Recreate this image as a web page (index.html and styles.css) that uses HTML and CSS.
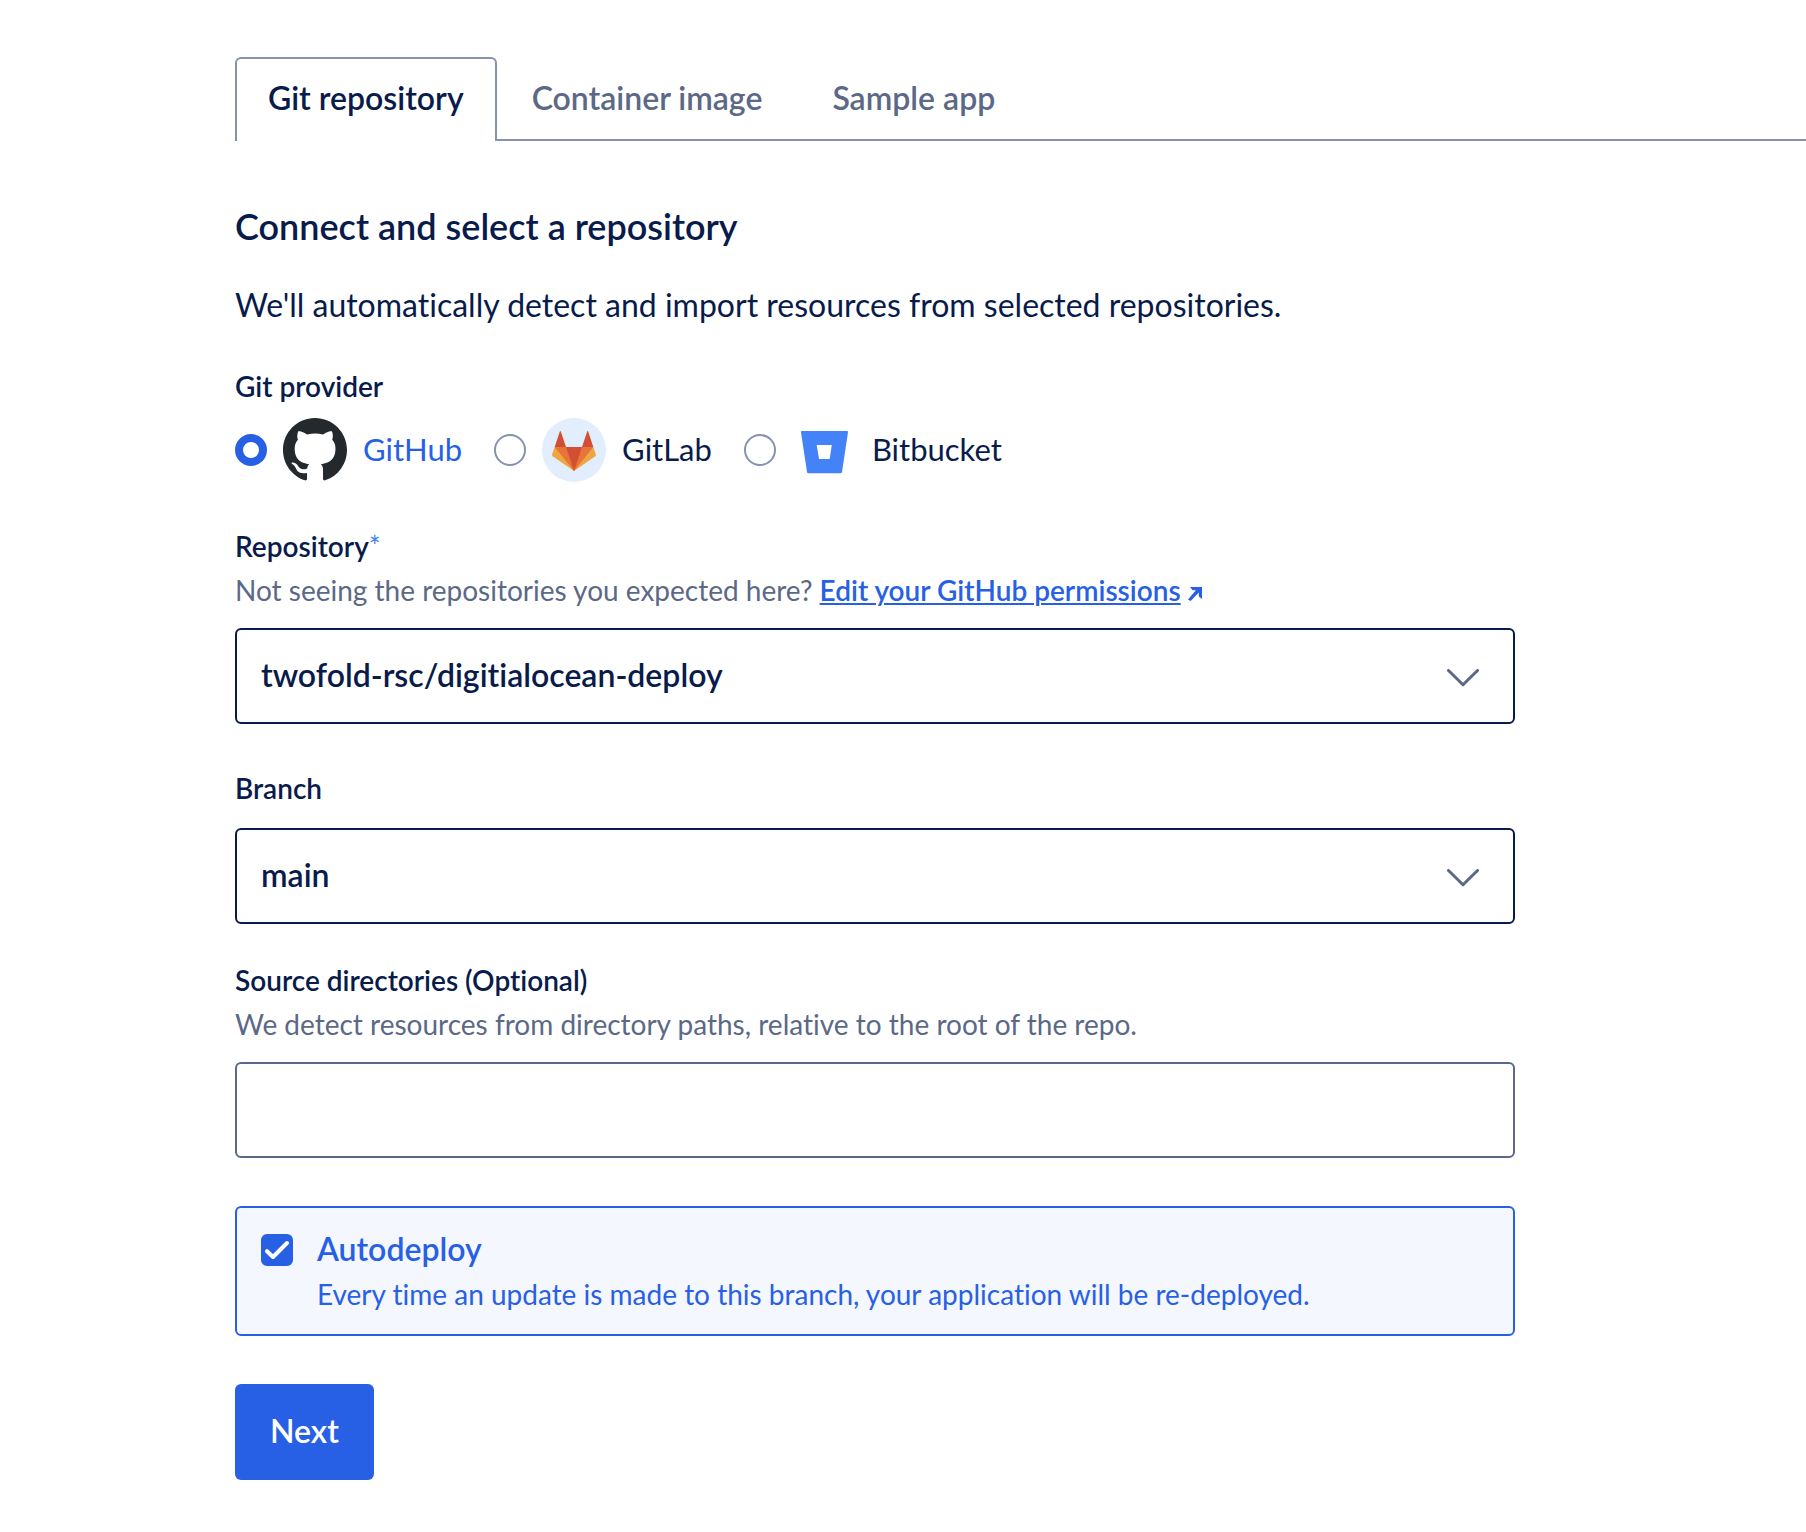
FILE: index.html
```html
<!DOCTYPE html>
<html lang="en">
<head>
  <meta charset="utf-8">
  <meta name="viewport" content="width=device-width, initial-scale=1">
  <title>Create app</title>
  <link rel="stylesheet" href="styles.css">
</head>
<body>
  <main class="page">
    <div class="tabs" role="tablist">
      <button class="tab tab-active" type="button" role="tab" aria-selected="true">Git repository</button>
      <button class="tab" type="button" role="tab" aria-selected="false">Container image</button>
      <button class="tab" type="button" role="tab" aria-selected="false">Sample app</button>
    </div>

    <form class="form">
      <h1 class="title">Connect and select a repository</h1>
      <p class="intro">We'll automatically detect and import resources from selected repositories.</p>

      <fieldset class="providers">
        <legend class="label">Git provider</legend>
        <div class="provider-list">
          <label class="provider">
            <input class="radio" type="radio" name="provider" checked>
            <svg class="logo" viewBox="0 0 16 16" aria-hidden="true"><path fill="#24292e" d="M8 0C3.58 0 0 3.58 0 8c0 3.54 2.29 6.53 5.47 7.59.4.07.55-.17.55-.38 0-.19-.01-.82-.01-1.49-2.01.37-2.53-.49-2.69-.94-.09-.23-.48-.94-.82-1.13-.28-.15-.68-.52-.01-.53.63-.01 1.08.58 1.23.82.72 1.21 1.87.87 2.33.66.07-.52.28-.87.51-1.07-1.78-.2-3.64-.89-3.64-3.95 0-.87.31-1.59.82-2.15-.08-.2-.36-1.02.08-2.12 0 0 .67-.21 2.2.82.64-.18 1.32-.27 2-.27.68 0 1.36.09 2 .27 1.53-1.04 2.2-.82 2.2-.82.44 1.1.16 1.92.08 2.12.51.56.82 1.27.82 2.15 0 3.07-1.87 3.75-3.65 3.95.29.25.54.73.54 1.48 0 1.07-.01 1.93-.01 2.2 0 .21.15.46.55.38A8.013 8.013 0 0 0 16 8c0-4.42-3.58-8-8-8z"/></svg>
            <span class="provider-name">GitHub</span>
          </label>
          <label class="provider">
            <input class="radio" type="radio" name="provider">
            <svg class="logo" viewBox="0 0 64 64" aria-hidden="true">
              <circle cx="32" cy="32" r="32" fill="#e2eefd"/>
              <path fill="#efa640" d="M12.7 29 10.1 36.6q-.3 1 .6 1.7L32 53 53.3 38.3q.9-.7.6-1.7L51.3 29z"/>
              <path fill="#e9743a" d="M12.7 29H51.3L32 53z"/>
              <path fill="#d14f33" d="M24 29H40L32 53zM12.7 29 17.8 13.4q.5-.9 1 0L24 29zM51.3 29 46.2 13.400q-.5-.9-1 0L40 29z"/>
            </svg>
            <span class="provider-name">GitLab</span>
          </label>
          <label class="provider">
            <input class="radio" type="radio" name="provider">
            <svg class="logo" viewBox="0 0 64 64" aria-hidden="true"><path fill="#4482f7" fill-rule="evenodd" d="M10 13H55q1.200 0 1 1.200L50 54q-.2 1.300-1.500 1.300H16.500Q15.200 55.300 15 54L9 14.200Q8.800 13 10 13zM24.700 27 27 41H37.700L39.800 27z"/></svg>
            <span class="provider-name">Bitbucket</span>
          </label>
        </div>
      </fieldset>

      <div class="field">
        <label class="label" for="repository">Repository<span class="required">*</span></label>
        <p class="hint">Not seeing the repositories you expected here? <a class="link" href="#permissions">Edit your GitHub permissions</a>
          <svg class="external" viewBox="0 0 14 14" aria-hidden="true"><path fill="#2860e5" d="M2 0H14V12L10.800 9.600V5.600L2.600 14 0 12.500 7.900 3.300H4.600z"/></svg></p>
        <div class="select-box">
          <select class="control select" id="repository"><option>twofold-rsc/digitialocean-deploy</option></select>
          <svg class="chevron" viewBox="0 0 32 18" aria-hidden="true"><path d="M1.500 1.500 16 15.800 30.500 1.500"/></svg>
        </div>
      </div>

      <div class="field">
        <label class="label label-spaced" for="branch">Branch</label>
        <div class="select-box">
          <select class="control select" id="branch"><option>main</option></select>
          <svg class="chevron" viewBox="0 0 32 18" aria-hidden="true"><path d="M1.500 1.500 16 15.800 30.500 1.500"/></svg>
        </div>
      </div>

      <div class="field field-source">
        <label class="label" for="source">Source directories (Optional)</label>
        <p class="hint">We detect resources from directory paths, relative to the root of the repo.</p>
        <input class="control text-input" id="source" type="text">
      </div>

      <label class="autodeploy">
        <span class="check">
          <input class="checkbox" type="checkbox" checked>
          <svg class="tick" viewBox="0 0 32 32" aria-hidden="true"><path d="M6 17.200 12 23 26 9"/></svg>
        </span>
        <span class="autodeploy-text">
          <span class="autodeploy-title">Autodeploy</span>
          <span class="autodeploy-note">Every time an update is made to this branch, your application will be re-deployed.</span>
        </span>
      </label>

      <button class="next" type="button">Next</button>
    </form>
  </main>
</body>
</html>
```
FILE: styles.css
```css
* {
  box-sizing: border-box;
}

body {
  margin: 0;
  background: #fff;
  color: #081b4b;
  font-family: Lato, "Open Sans", sans-serif;
  font-size: 32px;
  font-variant-ligatures: none;
  line-height: 48px;
}

.page {
  padding: 57px 0 52px 235px;
}

.tabs {
  display: flex;
}

.tabs::after {
  content: "";
  flex: 1;
  border-bottom: 2px solid #8592b0;
}

.tab {
  height: 84px;
  padding: 0 35px;
  border: 0 solid #8592b0;
  border-bottom-width: 2px;
  background: none;
  color: #5b6987;
  font: inherit;
  font-weight: 600;
}

.tab-active {
  padding: 0 31px 4px;
  border-width: 2px 2px 0;
  border-radius: 6px 6px 0 0;
  color: #081b4b;
}

.form {
  display: flex;
  flex-direction: column;
  max-width: 1280px;
  padding-top: 61px;
}

.title {
  margin: 0;
  font-size: 36px;
  font-weight: 600;
}

.intro {
  margin: 31px 0 0;
}

.providers {
  margin: 37px 0 0;
  padding: 0;
  border: 0;
}

.label {
  display: block;
  padding: 0;
  font-size: 28px;
  font-weight: 600;
  line-height: 40px;
}

.label-spaced {
  margin-bottom: 20px;
}

.provider-list {
  display: flex;
  gap: 32px;
  margin-top: 12px;
}

.provider {
  display: flex;
  align-items: center;
  gap: 16px;
}

.provider-name {
  padding-bottom: 2px;
  font-size: 31px;
}

.radio {
  appearance: none;
  width: 32px;
  height: 32px;
  margin: 0;
  border: 2px solid #8592b0;
  border-radius: 50%;
  background: #fff;
}

.radio:checked {
  border: 8px solid #2860e5;
}

.radio:checked ~ .provider-name {
  color: #2860e5;
}

.logo {
  width: 64px;
  height: 64px;
}

.field {
  margin-top: 44px;
}

.field-source {
  margin-top: 36px;
}

.required {
  color: #4482f7;
  font-weight: 400;
}

.hint {
  margin: 4px 0 18px;
  color: #5b6987;
  font-size: 28px;
  line-height: 40px;
}

.link {
  color: #2860e5;
  font-weight: 600;
  text-decoration-thickness: 2px;
  text-underline-offset: 2px;
}

.external {
  width: 14px;
  height: 14px;
}

.control {
  width: 100%;
  height: 96px;
  padding: 0 24px 2px;
  border: 2px solid #081b4b;
  border-radius: 6px;
  background: #fff;
  color: #081b4b;
  font: inherit;
  font-weight: 600;
}

.select-box {
  display: grid;
  align-items: center;
}

.select {
  grid-area: 1 / 1;
  appearance: none;
}

.chevron {
  grid-area: 1 / 1;
  justify-self: end;
  width: 32px;
  height: 18px;
  margin: 4px 36px 0 0;
  fill: none;
  stroke: #5b6987;
  stroke-width: 3;
  stroke-linecap: round;
  stroke-linejoin: round;
  pointer-events: none;
}

.text-input {
  display: block;
  border-color: #5b6987;
}

.autodeploy {
  display: flex;
  gap: 24px;
  margin-top: 48px;
  padding: 17px 24px 20px;
  border: 2px solid #2860e5;
  border-radius: 6px;
  background: #f4f7fe;
  color: #2860e5;
}

.check {
  display: grid;
  align-self: start;
  padding-top: 9px;
}

.checkbox {
  grid-area: 1 / 1;
  appearance: none;
  width: 32px;
  height: 32px;
  margin: 0;
  border: 2px solid #8592b0;
  border-radius: 6px;
  background: #fff;
}

.checkbox:checked {
  border-color: #2860e5;
  background: #2860e5;
}

.tick {
  grid-area: 1 / 1;
  width: 32px;
  height: 32px;
  fill: none;
  stroke: #fff;
  stroke-width: 4;
  stroke-linecap: round;
  stroke-linejoin: round;
  pointer-events: none;
}

.autodeploy-text {
  display: flex;
  flex-direction: column;
  gap: 1px;
}

.autodeploy-title {
  line-height: 48px;
  font-weight: 600;
}

.autodeploy-note {
  font-size: 28px;
  line-height: 40px;
}

.next {
  align-self: start;
  height: 96px;
  margin-top: 48px;
  padding: 0 35px 2px;
  border: 0;
  border-radius: 6px;
  background: #2860e5;
  color: #fff;
  font: inherit;
  font-weight: 600;
}
```
